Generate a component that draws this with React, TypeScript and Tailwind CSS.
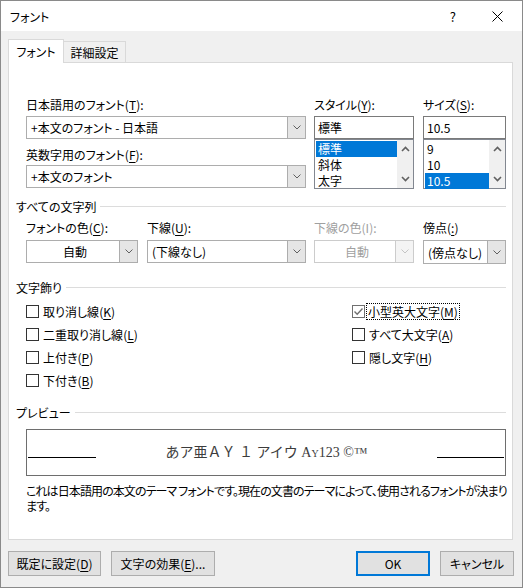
import React from "react";

const U = ({ c }: { c: string }) => <span className="underline underline-offset-[2px]">{c}</span>;

function Chevron({ color = "#606060" }: { color?: string }) {
  return (
    <svg width="8" height="5" viewBox="0 0 8 5">
      <path d="M0.5 0.5L4 4L7.5 0.5" fill="none" stroke={color} strokeWidth="1" />
    </svg>
  );
}

function ArrowUp() {
  return (
    <svg width="9" height="6" viewBox="0 0 9 6">
      <path d="M1 5L4.5 1.5L8 5" fill="none" stroke="#606060" strokeWidth="1.6" />
    </svg>
  );
}
function ArrowDown() {
  return (
    <svg width="9" height="6" viewBox="0 0 9 6">
      <path d="M1 1L4.5 4.5L8 1" fill="none" stroke="#606060" strokeWidth="1.6" />
    </svg>
  );
}

function Combo({
  cls,
  children,
  center,
  disabled,
}: {
  cls: string;
  children: React.ReactNode;
  center?: boolean;
  disabled?: boolean;
}) {
  return (
    <div
      className={`flex h-[23px] border bg-white ${disabled ? "border-[#cccccc]" : "border-[#adadad]"} ${cls}`}
    >
      <div
        className={`flex-1 flex items-center pl-[4px] ${center ? "justify-center" : ""} ${disabled ? "text-[#a0a0a0]" : ""}`}
      >
        {children}
      </div>
      <div
        className={`w-[18px] flex items-center justify-center border-l ${disabled ? "border-[#cccccc] bg-[#f4f4f4]" : "border-[#adadad] bg-[#e5e5e5]"}`}
      >
        <Chevron color={disabled ? "#c4c4c4" : "#606060"} />
      </div>
    </div>
  );
}

function ListBox({ items, sel }: { items: string[]; sel: number }) {
  return (
    <div className="flex h-[50px] border border-[#828790] bg-white">
      <div className="flex-1 pl-[1px] pt-[1px] flex flex-col">
        {items.map((it, i) => (
          <div
            key={it}
            className={`h-[16px] leading-[16px] pl-[2px] ${i === sel ? "bg-[#0078d7] text-white" : ""}`}
          >
            {it}
          </div>
        ))}
      </div>
      <div className="w-[16px] bg-[#f0f0f0] flex flex-col justify-between items-center pt-[6px] pb-[6px]">
        <ArrowUp />
        <ArrowDown />
      </div>
    </div>
  );
}

function Section({ title }: { title: string }) {
  return (
    <div className="flex items-center h-[15px]">
      <span>{title}</span>
      <div className="flex-1 h-px bg-[#dcdcdc] ml-[4px]" />
    </div>
  );
}

function Check({
  pre,
  k,
  checked,
  focus,
}: {
  pre: string;
  k: string;
  checked?: boolean;
  focus?: boolean;
}) {
  return (
    <div className="flex items-center h-[23px]">
      <div
        className={`w-[13px] h-[13px] border bg-white flex items-center justify-center ${checked ? "border-[#707070]" : "border-[#333333]"}`}
      >
        {checked && (
          <svg width="11" height="11" viewBox="0 0 11 11">
            <path d="M1.5 5.5L4.2 8.2L9.5 2.5" fill="none" stroke="#707070" strokeWidth="1.4" />
          </svg>
        )}
      </div>
      <span
        className={
          focus
            ? "ml-[2px] px-[1px] outline-1 outline-dotted outline-black"
            : "ml-[4px]"
        }
      >
        {pre}(<U c={k} />)
      </span>
    </div>
  );
}

function Btn({ cls, children, def }: { cls: string; children: React.ReactNode; def?: boolean }) {
  return (
    <div
      className={`h-[25px] flex items-center justify-center bg-[#e1e1e1] ${def ? "border-2 border-[#0078d7]" : "border border-[#adadad]"} ${cls}`}
    >
      {children}
    </div>
  );
}

export default function App() {
  return (
    <div className="w-[523px] h-[588px] border border-[#8a8a8a] bg-[#f0f0f0] flex flex-col font-['Noto_Sans_CJK_JP','Noto_Sans',sans-serif] text-[12px] leading-[15px] [font-feature-settings:'palt'] text-black overflow-hidden">
      {/* title bar */}
      <div className="h-[30px] bg-white flex items-center pl-[9px] shrink-0">
        <span>フォント</span>
        <span className="ml-auto text-[13px]">?</span>
        <svg className="ml-[36px] mr-[19px]" width="11" height="11" viewBox="0 0 11 11">
          <path d="M0.5 0.5L10.5 10.5M10.5 0.5L0.5 10.5" stroke="#000" strokeWidth="1" />
        </svg>
      </div>

      {/* tabs */}
      <div className="ml-[7px] mt-[8px] flex items-end h-[23px]">
        <div className="relative z-10 h-[24px] mb-[-1px] w-[56px] bg-white border border-b-0 border-[#d9d9d9] flex items-center justify-center">
          フォント
        </div>
        <div className="h-[21px] w-[63px] ml-[-1px] bg-[#f0f0f0] border border-b-0 border-[#d9d9d9] flex items-center justify-center">
          詳細設定
        </div>
      </div>

      {/* panel */}
      <div className="ml-[7px] w-[505px] h-[478px] bg-white border border-[#d9d9d9] pl-[7px] pr-[6px] pt-[34px] flex flex-col">
        {/* font row */}
        <div className="ml-[10px] w-[480px] flex">
          <div className="w-[280px] flex flex-col">
            <div className="h-[15px]">
              日本語用のフォント(<U c="T" />):
            </div>
            <Combo cls="mt-[4px]">+本文のフォント - 日本語</Combo>
            <div className="h-[15px] mt-[8px]">
              英数字用のフォント(<U c="F" />):
            </div>
            <Combo cls="mt-[3px]">+本文のフォント</Combo>
          </div>
          <div className="w-[100px] ml-[8px] flex flex-col">
            <div className="h-[15px]">
              スタイル(<U c="Y" />):
            </div>
            <div className="mt-[4px] h-[23px] border border-[#7a7a7a] flex items-center pl-[3px]">標準</div>
            <ListBox items={["標準", "斜体", "太字"]} sel={0} />
          </div>
          <div className="w-[83px] ml-[9px] flex flex-col">
            <div className="h-[15px]">
              サイズ(<U c="S" />):
            </div>
            <div className="mt-[4px] h-[23px] border border-[#7a7a7a] flex items-center pl-[3px]">10.5</div>
            <ListBox items={["9", "10", "10.5"]} sel={2} />
          </div>
        </div>

        {/* all text */}
        <div className="mt-[10px]">
          <Section title="すべての文字列" />
        </div>
        <div className="ml-[10px] w-[480px] flex mt-[6px]">
          <div className="w-[112px] flex flex-col">
            <div className="h-[15px]">
              フォントの色(<U c="C" />):
            </div>
            <Combo cls="mt-[5px]" center>
              自動
            </Combo>
          </div>
          <div className="w-[159px] ml-[9px] flex flex-col">
            <div className="h-[15px]">
              下線(<U c="U" />):
            </div>
            <Combo cls="mt-[5px]">(下線なし)</Combo>
          </div>
          <div className="w-[100px] ml-[8px] flex flex-col">
            <div className="h-[15px] text-[#a0a0a0]">下線の色(I):</div>
            <Combo cls="mt-[5px]" center disabled>
              自動
            </Combo>
          </div>
          <div className="w-[83px] ml-[9px] flex flex-col">
            <div className="h-[15px]">
              傍点(<U c=":" />)
            </div>
            <Combo cls="mt-[5px] h-[24px]">(傍点なし)</Combo>
          </div>
        </div>

        {/* effects */}
        <div className="mt-[16px]">
          <Section title="文字飾り" />
        </div>
        <div className="ml-[10px] w-[480px] flex mt-[5px]">
          <div className="w-[326px] flex flex-col">
            <Check pre="取り消し線" k="K" />
            <Check pre="二重取り消し線" k="L" />
            <Check pre="上付き" k="P" />
            <Check pre="下付き" k="B" />
          </div>
          <div className="flex flex-col">
            <Check pre="小型英大文字" k="M" checked focus />
            <Check pre="すべて大文字" k="A" />
            <Check pre="隠し文字" k="H" />
          </div>
        </div>

        {/* preview */}
        <div className="mt-[13px]">
          <Section title="プレビュー" />
        </div>
        <div className="ml-[10px] w-[480px] mt-[9px] h-[47px] border border-[#6e6e6e] flex items-center px-[1px]">
          <div className="w-[68px] h-px bg-black mt-[10px]" />
          <div className="flex-1 text-center font-['Liberation_Serif','Noto_Sans_CJK_JP',serif] text-[14px] text-[#3c3c3c] [font-variant-caps:small-caps] [font-feature-settings:normal] whitespace-nowrap">
            あア亜ＡＹ １ アイウ Ay123 ©™
          </div>
          <div className="w-[67px] h-px bg-black mt-[10px]" />
        </div>
        <div className="ml-[10px] w-[486px] mt-[7px] whitespace-nowrap tracking-[-0.9px]">
          <div>これは日本語用の本文のテーマ フォントです。現在の文書のテーマによって、使用されるフォントが決まり</div>
          <div>ます。</div>
        </div>
      </div>

      {/* buttons */}
      <div className="ml-[7px] mr-[8px] mt-[11px] flex">
        <Btn cls="w-[93px]">
          既定に設定(<U c="D" />)
        </Btn>
        <Btn cls="w-[104px] ml-[10px]">
          文字の効果(<U c="E" />)...
        </Btn>
        <Btn cls="w-[74px] ml-auto" def>
          OK
        </Btn>
        <Btn cls="w-[74px] ml-[10px]">キャンセル</Btn>
      </div>
    </div>
  );
}
